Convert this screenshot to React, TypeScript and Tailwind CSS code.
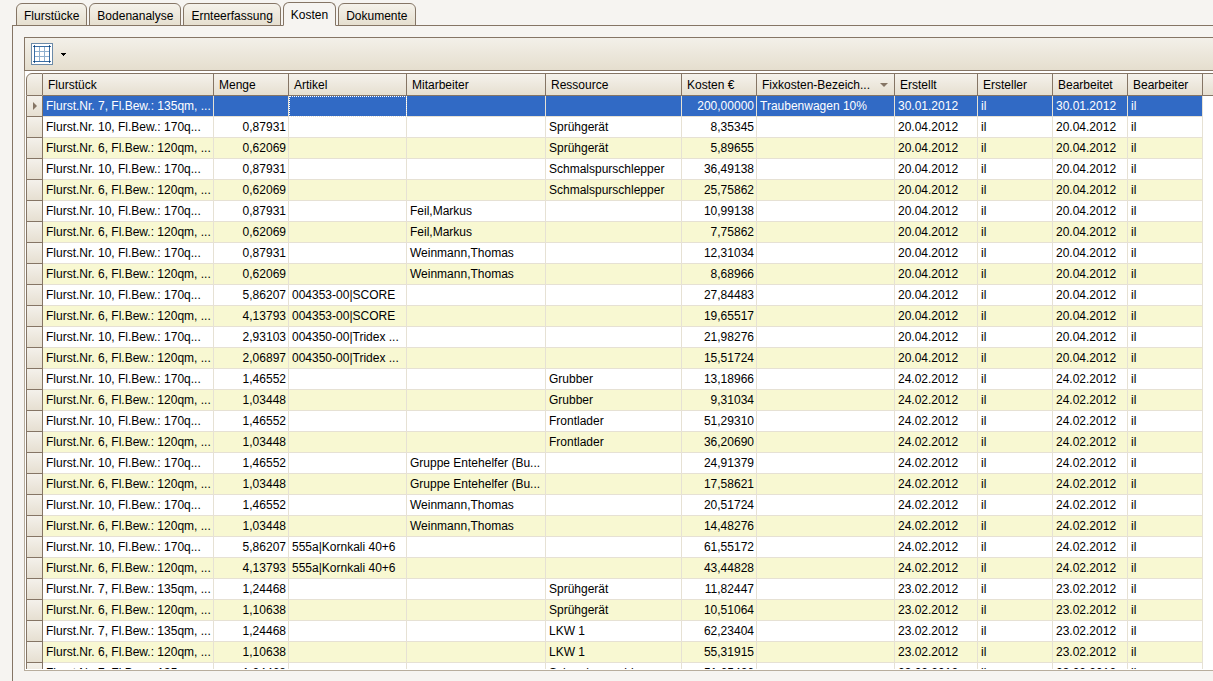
import { useState } from "react";
import clsx from "clsx";

type Row = {
  lot: string;
  amount: string;
  article: string;
  employee: string;
  resource: string;
  cost: string;
  fixed: string;
  date: string;
};

const tabs = ["Flurstücke", "Bodenanalyse", "Ernteerfassung", "Kosten", "Dokumente"];

const columns = [
  { title: "Flurstück", width: "w-[171px]" },
  { title: "Menge", width: "w-[75px]" },
  { title: "Artikel", width: "w-[118px]" },
  { title: "Mitarbeiter", width: "w-[139px]" },
  { title: "Ressource", width: "w-[136px]" },
  { title: "Kosten €", width: "w-[75px]" },
  { title: "Fixkosten-Bezeich...", width: "w-[138px]", sorted: true },
  { title: "Erstellt", width: "w-[83px]" },
  { title: "Ersteller", width: "w-[75px]" },
  { title: "Bearbeitet", width: "w-[75px]" },
  { title: "Bearbeiter", width: "w-[75px]" },
];

const LOT_6 = "Flurst.Nr. 6, Fl.Bew.: 120qm, ...";
const LOT_7 = "Flurst.Nr. 7, Fl.Bew.: 135qm, ...";
const LOT_10 = "Flurst.Nr. 10, Fl.Bew.: 170q...";

const row = (
  lot: string,
  amount: string,
  article: string,
  employee: string,
  resource: string,
  cost: string,
  date: string,
  fixed = ""
): Row => ({ lot, amount, article, employee, resource, cost, date, fixed });

const rows: Row[] = [
  row(LOT_7, "", "", "", "", "200,00000", "30.01.2012", "Traubenwagen 10%"),
  row(LOT_10, "0,87931", "", "", "Sprühgerät", "8,35345", "20.04.2012"),
  row(LOT_6, "0,62069", "", "", "Sprühgerät", "5,89655", "20.04.2012"),
  row(LOT_10, "0,87931", "", "", "Schmalspurschlepper", "36,49138", "20.04.2012"),
  row(LOT_6, "0,62069", "", "", "Schmalspurschlepper", "25,75862", "20.04.2012"),
  row(LOT_10, "0,87931", "", "Feil,Markus", "", "10,99138", "20.04.2012"),
  row(LOT_6, "0,62069", "", "Feil,Markus", "", "7,75862", "20.04.2012"),
  row(LOT_10, "0,87931", "", "Weinmann,Thomas", "", "12,31034", "20.04.2012"),
  row(LOT_6, "0,62069", "", "Weinmann,Thomas", "", "8,68966", "20.04.2012"),
  row(LOT_10, "5,86207", "004353-00|SCORE", "", "", "27,84483", "20.04.2012"),
  row(LOT_6, "4,13793", "004353-00|SCORE", "", "", "19,65517", "20.04.2012"),
  row(LOT_10, "2,93103", "004350-00|Tridex ...", "", "", "21,98276", "20.04.2012"),
  row(LOT_6, "2,06897", "004350-00|Tridex ...", "", "", "15,51724", "20.04.2012"),
  row(LOT_10, "1,46552", "", "", "Grubber", "13,18966", "24.02.2012"),
  row(LOT_6, "1,03448", "", "", "Grubber", "9,31034", "24.02.2012"),
  row(LOT_10, "1,46552", "", "", "Frontlader", "51,29310", "24.02.2012"),
  row(LOT_6, "1,03448", "", "", "Frontlader", "36,20690", "24.02.2012"),
  row(LOT_10, "1,46552", "", "Gruppe Entehelfer (Bu...", "", "24,91379", "24.02.2012"),
  row(LOT_6, "1,03448", "", "Gruppe Entehelfer (Bu...", "", "17,58621", "24.02.2012"),
  row(LOT_10, "1,46552", "", "Weinmann,Thomas", "", "20,51724", "24.02.2012"),
  row(LOT_6, "1,03448", "", "Weinmann,Thomas", "", "14,48276", "24.02.2012"),
  row(LOT_10, "5,86207", "555a|Kornkali 40+6", "", "", "61,55172", "24.02.2012"),
  row(LOT_6, "4,13793", "555a|Kornkali 40+6", "", "", "43,44828", "24.02.2012"),
  row(LOT_7, "1,24468", "", "", "Sprühgerät", "11,82447", "23.02.2012"),
  row(LOT_6, "1,10638", "", "", "Sprühgerät", "10,51064", "23.02.2012"),
  row(LOT_7, "1,24468", "", "", "LKW 1", "62,23404", "23.02.2012"),
  row(LOT_6, "1,10638", "", "", "LKW 1", "55,31915", "23.02.2012"),
  row(LOT_7, "1,24468", "", "", "Schmalspurschlepper", "51,65426", "23.02.2012"),
];

function GridIcon() {
  return (
    <svg width="22" height="22" viewBox="0 0 22 22" shapeRendering="crispEdges" aria-hidden="true">
      <rect x="0.5" y="0.5" width="21" height="21" fill="#fff" stroke="#6b8aa8" />
      <path d="M8.5 4v14M13.5 4v14M4 8.5h14M4 13.5h14" stroke="#8fb0cf" fill="none" />
      <path d="M3.5 2v18M18.5 2v18M2 3.5h18M2 18.5h18" stroke="#3a6ea5" fill="none" />
      <path d="M3 3h1v1h-1zM18 3h1v1h-1zM3 18h1v1h-1zM18 18h1v1h-1z" fill="#12406f" />
    </svg>
  );
}

export default function App() {
  const [active, setActive] = useState("Kosten");
  const [selected, setSelected] = useState(0);

  return (
    <div className="flex h-screen flex-col overflow-hidden bg-[#f6f4f1] pl-3 font-['Liberation_Sans',Arial,sans-serif] text-xs text-black">
      <div role="tablist" className="z-10 flex h-[26px] shrink-0 items-end gap-0.5 pl-1">
        {tabs.map((tab) => (
          <button
            key={tab}
            role="tab"
            aria-selected={tab === active}
            onClick={() => setActive(tab)}
            className={clsx(
              "rounded-t-md border border-[#857565] px-[7px] pt-0.5",
              tab === active
                ? "h-6 border-b-[#f6f4f1] bg-[#f6f4f1]"
                : "h-[23px] bg-linear-to-b from-[#f5f2eb] to-[#e6dfcf]"
            )}
          >
            {tab}
          </button>
        ))}
      </div>

      <main className="-mt-px flex min-h-0 flex-1 flex-col border-t border-l border-[#857565] pt-[11px] pb-2.5 pl-[11px]">
        <div className="flex h-[34px] shrink-0 items-center border-y border-l border-[#857565] bg-linear-to-b from-[#f3f0e9] to-[#e5dece] pl-1.5">
          <button aria-label="Tabellenansicht" className="flex items-center gap-2">
            <GridIcon />
            <svg width="5" height="3" viewBox="0 0 5 3" shapeRendering="crispEdges" aria-hidden="true">
              <path d="M0 0h5L2.5 3z" />
            </svg>
          </button>
        </div>

        <div className="min-h-0 flex-1 overflow-hidden border-b border-l border-[#b8ad9d] bg-white pt-0.5 pb-px pl-px">
          <div className="h-full overflow-hidden">
            <table className="w-full min-w-[1180px] table-fixed border-separate border-spacing-0 whitespace-nowrap">
              <colgroup>
                <col className="w-[17px]" />
                {columns.map((c) => (
                  <col key={c.title} className={c.width} />
                ))}
                <col />
              </colgroup>
              <thead>
                <tr className="h-[23px]">
                  <th className="rounded-tl-md border border-[#857565] bg-linear-to-b from-[#f5f2ec] to-[#e6dfd0] p-0" />
                  {columns.map((c) => (
                    <th
                      key={c.title}
                      className="border-y border-r border-[#857565] bg-linear-to-b from-[#f5f2ec] to-[#e6dfd0] py-0 pr-1.5 pl-[5px] text-left font-normal"
                    >
                      <div className="flex items-center justify-between">
                        {c.title}
                        {c.sorted && (
                          <svg width="8" height="4" viewBox="0 0 8 4" aria-hidden="true">
                            <path d="M0 0h8L4 4z" fill="#857565" />
                          </svg>
                        )}
                      </div>
                    </th>
                  ))}
                  <th className="border-y border-[#857565] bg-linear-to-b from-[#f5f2ec] to-[#e6dfd0] p-0" />
                </tr>
              </thead>
              <tbody>
                {rows.map((r, i) => {
                  const on = i === selected;
                  const cells = [r.lot, r.amount, r.article, r.employee, r.resource, r.cost, r.fixed, r.date, "il", r.date, "il"];
                  return (
                    <tr key={i} onClick={() => setSelected(i)} className="h-[21px]">
                      <td className="border-x border-b border-[#857565] bg-linear-to-b from-[#f4f1eb] to-[#e6dfd1] p-0">
                        {on && (
                          <svg width="4" height="8" viewBox="0 0 4 8" className="mx-auto" aria-hidden="true">
                            <path d="M0 0v8l4-4z" fill="#857565" />
                          </svg>
                        )}
                      </td>
                      {cells.map((text, j) => (
                        <td
                          key={j}
                          className={clsx(
                            "overflow-hidden border-r border-b border-[#e6e1d4] py-0 pr-0.5 pl-[3px]",
                            (j === 1 || j === 5) && "text-right",
                            on ? "bg-[#316ac5] text-white" : i % 2 === 0 ? "bg-[#f8f8d2]" : "bg-white",
                            on && j === 2 && "outline-1 -outline-offset-1 outline-dotted outline-white"
                          )}
                        >
                          {text}
                        </td>
                      ))}
                      <td className="bg-white p-0" />
                    </tr>
                  );
                })}
              </tbody>
            </table>
          </div>
        </div>
      </main>
    </div>
  );
}
